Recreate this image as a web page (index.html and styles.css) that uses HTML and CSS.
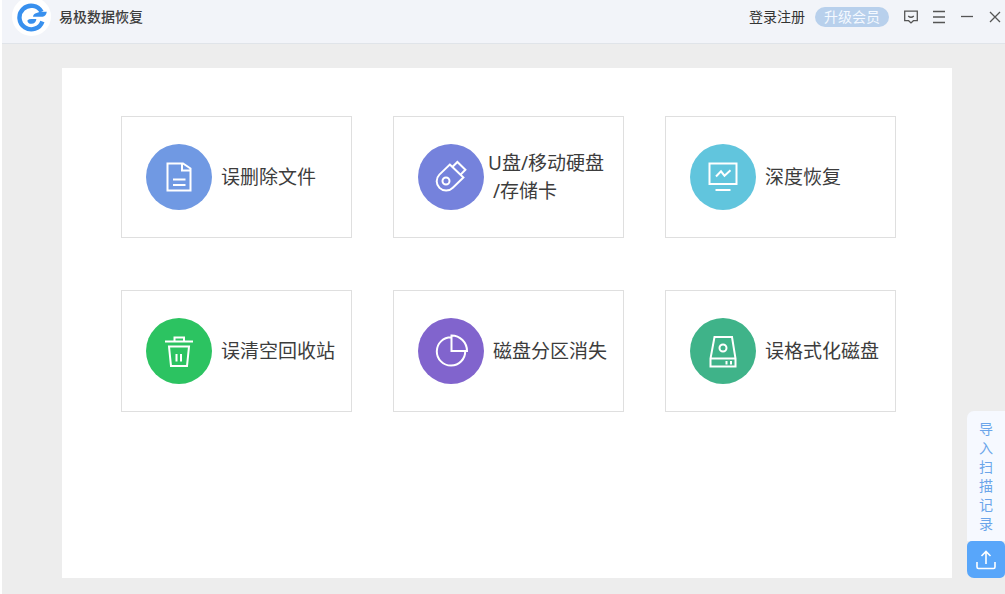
FILE: index.html
```html
<!DOCTYPE html>
<html lang="zh-CN">
<head>
<meta charset="utf-8">
<meta name="viewport" content="width=device-width, initial-scale=1">
<title>易极数据恢复</title>
<link rel="stylesheet" href="styles.css">
</head>
<body>
<div class="app">
  <header class="titlebar">
    <div class="brand">
      <span class="logo">
        <svg width="32" height="30" viewBox="0 0 32 30" aria-hidden="true">
          <path d="M25.6 9.8A11.8 11.8 0 1 0 26.4 19.4" fill="none" stroke="#3890ee" stroke-width="4.4"/>
          <path d="M24 9.8H30.8Q30 14.4 26.6 14.8H17Q17.4 11.4 20.6 11Z" fill="#3890ee"/>
          <path d="M11.4 18.4Q12.6 17 15.4 17H20.4Q19.8 21.6 15.4 21.8Q11.6 21.8 11.4 18.4Z" fill="#3890ee"/>
        </svg>
      </span>
      <h1 class="brand-name">易极数据恢复</h1>
    </div>
    <nav class="actions">
      <a class="login" href="#">登录注册</a>
      <button class="upgrade" type="button">升级会员</button>
      <button class="tool" type="button" aria-label="反馈">
        <svg width="14" height="14" viewBox="0 0 14 14"><path d="M.7 1.2H13.3V10.7H9.4L7 12.9L4.6 10.7H.7ZM4.2 6Q7 8.6 9.8 6"/></svg>
      </button>
      <button class="tool" type="button" aria-label="菜单">
        <svg width="14" height="14" viewBox="0 0 14 14"><path d="M1 1.5H13M1 7H13M1 12.5H13"/></svg>
      </button>
      <button class="tool" type="button" aria-label="最小化">
        <svg width="14" height="14" viewBox="0 0 14 14"><path d="M1 6.5H13"/></svg>
      </button>
      <button class="tool" type="button" aria-label="关闭">
        <svg width="14" height="14" viewBox="0 0 14 14"><path d="M2 2L12 12M12 2L2 12"/></svg>
      </button>
    </nav>
  </header>

  <div class="workspace">
    <main class="panel">
      <button class="card" type="button">
        <span class="badge badge-file">
          <svg width="36" height="36" viewBox="0 0 36 36"><path d="M6.5 4.5H22L29.5 9.5V31.5H6.5ZM21 4.5V11.5H29.5M12 20.5H24.5M12 26H24.5"/></svg>
        </span>
        <span class="label">误删除文件</span>
      </button>
      <button class="card" type="button">
        <span class="badge badge-usb">
          <svg width="36" height="36" viewBox="0 0 36 36"><path d="M16.8 5.6L30.4 18.4L19.8 28.8A9.4 9.4 0 0 1 6.4 15.6ZM19.6 7.8L24.4 3L32.4 10.8L27.6 15.6"/><circle cx="13" cy="22" r="3.5"/></svg>
        </span>
        <span class="label label-wide">U盘/移动硬盘<br><span class="indent">/存储卡</span></span>
      </button>
      <button class="card" type="button">
        <span class="badge badge-deep">
          <svg width="36" height="36" viewBox="0 0 36 36"><path d="M4.5 4.5H31.5V25H4.5ZM10.5 31H25.5M11 17.5L16 12.3L19.5 16.7L25.5 11.3"/></svg>
        </span>
        <span class="label">深度恢复</span>
      </button>
      <button class="card" type="button">
        <span class="badge badge-trash">
          <svg width="36" height="36" viewBox="0 0 36 36"><path d="M4 8.5H32M13.5 8.5V4.5H23V8.5M8 13.5H28L26 33H10ZM15.5 21V28.5M20 21V28.5"/></svg>
        </span>
        <span class="label">误清空回收站</span>
      </button>
      <button class="card" type="button">
        <span class="badge badge-disk">
          <svg width="36" height="36" viewBox="0 0 36 36"><path d="M18.5 4.2A14.2 14.2 0 1 0 32.2 18M18.5 2.5V18H34A15.5 15.5 0 0 0 18.5 2.5Z"/></svg>
        </span>
        <span class="label">磁盘分区消失</span>
      </button>
      <button class="card" type="button">
        <span class="badge badge-format">
          <svg width="36" height="36" viewBox="0 0 36 36"><path d="M9.5 4H27L30.5 25.5V33.5H5.5V25.5ZM5.5 25.5H30.5M21.5 28V31.5M26 28V31.5"/><circle cx="18" cy="15" r="3.5"/></svg>
        </span>
        <span class="label">误格式化磁盘</span>
      </button>
    </main>
    <aside class="dock">
      <button class="dock-text" type="button">导入扫描记录</button>
      <button class="dock-upload" type="button" aria-label="导入">
        <svg width="20" height="20" viewBox="0 0 20 20"><path d="M10 14V2M5.5 6L10 1.5L14.5 6M1 12V17Q1 18.5 2.5 18.5H17.5Q19 18.5 19 17V12"/></svg>
      </button>
    </aside>
  </div>
</div>
</body>
</html>
```
FILE: styles.css
```css
* {
  box-sizing: border-box;
}

body {
  margin: 0;
  padding-left: 2px;
  background: #fff;
  color: #3c3c3c;
  font-family: "Noto Sans", "Noto Sans CJK SC", sans-serif;
  font-size: 14px;
}

button {
  margin: 0;
  padding: 0;
  border: 0;
  background: none;
  color: inherit;
  font: inherit;
  cursor: pointer;
}

svg {
  display: block;
  fill: none;
}

.app {
  display: flex;
  flex-direction: column;
  min-height: 100vh;
  background: #ededed;
}

.titlebar {
  display: flex;
  align-items: center;
  justify-content: space-between;
  height: 44px;
  padding: 0 3px 10px 10px;
  border-bottom: 1px solid #e0e4e9;
  background: #f2f4f9;
}

.brand,
.actions {
  display: flex;
  align-items: center;
}

.brand {
  gap: 8px;
}

.logo {
  display: grid;
  place-items: center;
  width: 39px;
  height: 39px;
  border-radius: 50%;
  background: #fff;
}

.brand-name {
  margin: 0;
  font-size: 14px;
  font-weight: 500;
  line-height: 20px;
}

.login {
  margin-right: 10px;
  color: #333;
  line-height: 20px;
  text-decoration: none;
}

.upgrade {
  height: 20px;
  margin-right: 15px;
  padding: 0 9px;
  border-radius: 10px;
  background: #b8d0ec;
  color: #f4f9ff;
  line-height: 20px;
}

.tool {
  margin-right: 14px;
}

.tool:last-child {
  margin-right: 0;
}

.tool svg {
  stroke: #555;
  stroke-width: 1.3;
}

.workspace {
  flex: 1;
  display: grid;
  grid-template-columns: minmax(0, 1fr) 53px;
  padding: 24px 0 16px 60px;
}

.panel {
  display: grid;
  grid-template-columns: repeat(3, minmax(0, 1fr));
  grid-auto-rows: 122px;
  align-content: start;
  gap: 52px 41px;
  padding: 48px 56px 48px 59px;
  background: #fff;
}

.card {
  display: flex;
  align-items: center;
  gap: 9px;
  padding-left: 24px;
  border: 1px solid #dfdfdf;
  text-align: left;
}

.badge {
  flex: none;
  display: grid;
  place-items: center;
  width: 66px;
  height: 66px;
  border-radius: 50%;
}

.badge svg {
  stroke: #fff;
  stroke-width: 2;
}

.badge-file { background: #7099e3; }
.badge-usb { background: #7582dc; }
.badge-deep { background: #61c5dd; }
.badge-trash { background: #2cc361; }
.badge-disk { background: #8164cd; }
.badge-format { background: #3fb389; }

.label {
  font-size: 19px;
  line-height: 28px;
  white-space: nowrap;
}

.label-wide {
  margin-left: -5px;
}

.indent {
  padding-left: 5px;
}

.dock {
  align-self: end;
  justify-self: end;
  display: flex;
  flex-direction: column;
  width: 38px;
}

.dock-text {
  padding: 8px 12px;
  border-radius: 7px 0 0 0;
  background: #f6f9ff;
  color: #6ba5ea;
  line-height: 19px;
  word-break: break-all;
}

.dock-upload {
  display: grid;
  place-items: center;
  height: 37px;
  border-radius: 5px 5px 5px 7px;
  background: #58a6fa;
}

.dock-upload svg {
  stroke: #fff;
  stroke-width: 1.6;
}
```
